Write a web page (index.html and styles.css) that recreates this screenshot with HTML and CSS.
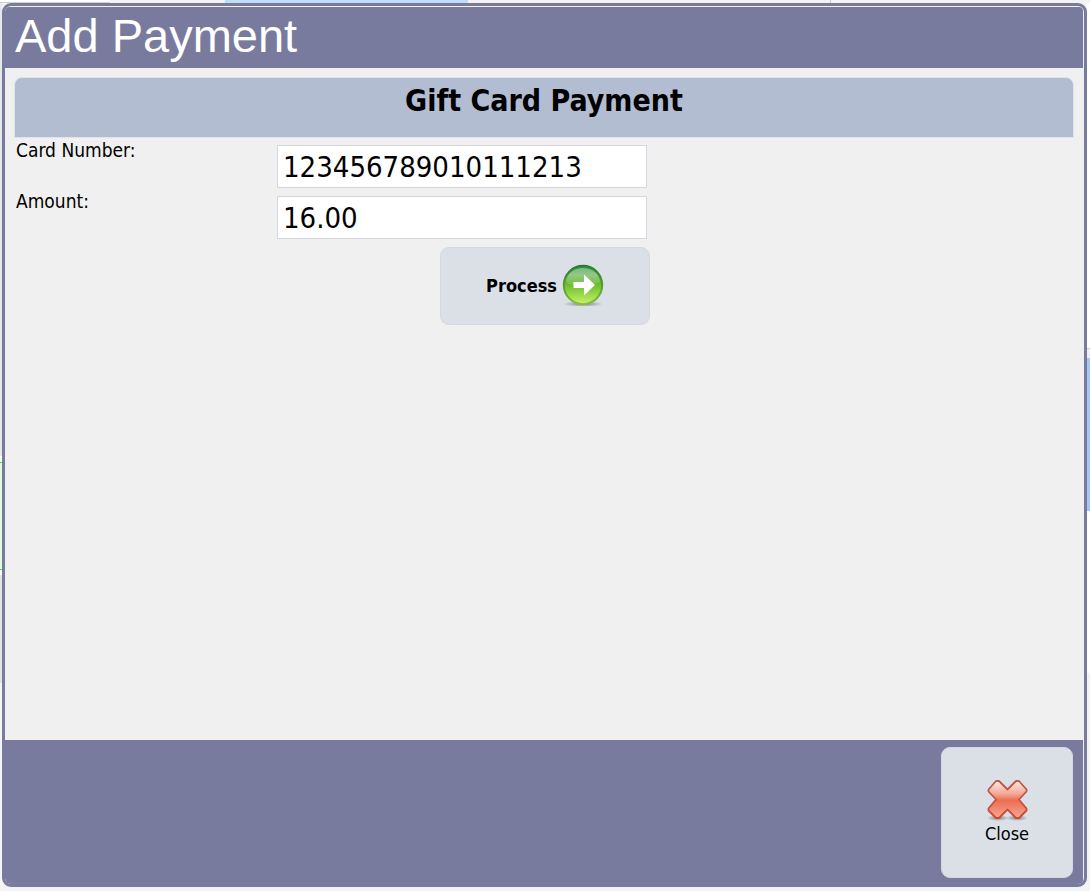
FILE: index.html
```html
<!DOCTYPE html>
<html lang="en">
<head>
    <meta charset="UTF-8">
    <meta name="viewport" content="width=device-width, initial-scale=1.0">
    <title>Add Payment</title>
    <link rel="stylesheet" href="styles.css">
</head>
<body>
    <div class="page-top">
        <div class="tab tab-first"></div>
        <div class="tab tab-gap"></div>
        <div class="tab tab-active"></div>
        <div class="tab tab-wide"></div>
        <div class="tab"></div>
    </div>
    <div class="page-left"></div>
    <div class="dialog" role="dialog" aria-labelledby="dialogTitle">
        <header class="dialog-header">
            <h1 id="dialogTitle">Add Payment</h1>
        </header>
        <main class="dialog-body">
            <h2>Gift Card Payment</h2>
            <form id="giftCardForm" class="payment-form">
                <label for="cardNumber">Card Number:</label>
                <input type="text" id="cardNumber" value="123456789010111213">
                <label for="amount">Amount:</label>
                <input type="text" id="amount" value="16.00">
                <button type="submit" class="btn process-btn">
                    Process
                    <svg width="42" height="42" viewBox="0 0 42 42" aria-hidden="true">
                        <defs>
                            <linearGradient id="ballFill" x1="0" y1="0" x2="0" y2="1">
                                <stop offset="0" stop-color="#2f8b3c"/>
                                <stop offset="0.45" stop-color="#66b82c"/>
                                <stop offset="0.75" stop-color="#9ad94a"/>
                                <stop offset="1" stop-color="#cdf268"/>
                            </linearGradient>
                            <linearGradient id="ballEdge" x1="0" y1="0" x2="0" y2="1">
                                <stop offset="0" stop-color="#2b7a3a"/>
                                <stop offset="0.6" stop-color="#57a62c"/>
                                <stop offset="1" stop-color="#86bf45"/>
                            </linearGradient>
                            <linearGradient id="ballShine" x1="0" y1="0" x2="0" y2="1">
                                <stop offset="0" stop-color="#fff" stop-opacity="0.35"/>
                                <stop offset="0.4" stop-color="#fff" stop-opacity="0.4"/>
                                <stop offset="1" stop-color="#fff" stop-opacity="0.08"/>
                            </linearGradient>
                            <radialGradient id="shadow">
                                <stop offset="0" stop-color="#555" stop-opacity="0.7"/>
                                <stop offset="1" stop-color="#555" stop-opacity="0"/>
                            </radialGradient>
                        </defs>
                        <ellipse cx="21" cy="40" rx="20" ry="3" fill="url(#shadow)"/>
                        <circle cx="21" cy="21" r="19.2" fill="url(#ballFill)" stroke="url(#ballEdge)" stroke-width="2"/>
                        <path d="M4 18C5 9 12 4 21 4s16 5 17 14c-5 3-10 2-17 3s-12 1-17-3z" fill="url(#ballShine)"/>
                        <path d="M11.500 18H22v-7.500L33 21 22 31.500V24H11.500z" fill="#fff"/>
                    </svg>
                </button>
            </form>
        </main>
        <footer class="dialog-footer">
            <button type="button" class="btn close-btn">
                <svg width="42" height="42" viewBox="0 0 42 42" aria-hidden="true">
                    <defs>
                        <linearGradient id="crossFill" x1="0" y1="0" x2="0" y2="1">
                            <stop offset="0" stop-color="#fdebe6"/>
                            <stop offset="0.35" stop-color="#f3a695"/>
                            <stop offset="0.52" stop-color="#ec6d50"/>
                            <stop offset="0.75" stop-color="#f18872"/>
                            <stop offset="1" stop-color="#f8a896"/>
                        </linearGradient>
                        <linearGradient id="crossEdge" x1="0" y1="0" x2="0" y2="1">
                            <stop offset="0" stop-color="#bd5a4a"/>
                            <stop offset="1" stop-color="#cc4a35"/>
                        </linearGradient>
                    </defs>
                    <ellipse cx="12" cy="39" rx="11" ry="3" fill="url(#shadow)"/>
                    <ellipse cx="31" cy="39" rx="11" ry="3" fill="url(#shadow)"/>
                    <path d="M10 2h3l8.500 8.500L30 2h3l7.500 8.500v2L33 20.500l7.500 9v2L33 39h-3L21.500 30.500 13 39h-3L2.500 31.500v-2L10 20.500l-7.500-8v-2z" fill="url(#crossFill)" stroke="url(#crossEdge)" stroke-width="1.800" stroke-linejoin="round"/>
                </svg>
                Close
            </button>
        </footer>
    </div>
    <div class="page-right"></div>

    <script>
        document.getElementById('giftCardForm').addEventListener('submit', function(event) {
            event.preventDefault();
        });
    </script>
</body>
</html>
```
FILE: styles.css
```css
:root {
    --frame-color: #797b9e;
    --panel-color: #f0f0f0;
    --button-color: #dbdfe6;
    --line-color: #d7d7e2;
}

* {
    box-sizing: border-box;
}

body {
    font-family: "DejaVu Sans Condensed", Tahoma, "DejaVu Sans", sans-serif;
    font-size: 19px;
    color: #000;
    margin: 0;
    min-height: 100vh;
    display: grid;
    grid-template-columns: 2px 1fr 3px;
    grid-template-rows: 3px 1fr;
    background: #f3f3f4;
}

/* edges of the page behind the dialog */
.page-top {
    grid-column: 1 / -1;
    display: flex;
}

.tab {
    flex: 260;
    background: #f3f3f3;
}

.tab-first {
    flex: 110;
    background: #fff;
    border-bottom: 1px solid #d0d0d0;
}

.tab-gap {
    flex: 116;
}

.tab-active {
    flex: 243;
    background: #bfdcf9;
}

.tab-wide {
    flex: 363;
    border-right: 1px solid #c8c8c8;
}

.page-left {
    background: linear-gradient(#e6e8ec 0 453px, #fff 453px 459px, #4be04b 459px 460px, #e0fbe0 460px 566px, #4be04b 566px 567px, #fff 567px 572px, #e2e4ea 572px 680px, #f5f5f5 680px);
}

.page-right {
    background: linear-gradient(#fff 0 345px, #ccc 345px 346px, #f0f0f0 346px 355px, #a1c9f1 355px 508px, #fff 508px 670px, #f3f3f3 670px);
}

.dialog {
    display: flex;
    flex-direction: column;
    margin-bottom: 4px;
    border: 3px solid var(--frame-color);
    border-radius: 9px;
    background: var(--panel-color);
    padding: 1px 1px 0 0;
    overflow: hidden;
}

.dialog-header {
    background: var(--frame-color);
    border-radius: 4px 4px 0 0;
    padding: 3px 10px 6px;
}

h1 {
    margin: 0;
    color: #fff;
    font: 47px/52px "Liberation Sans", Arial, sans-serif;
}

.dialog-body {
    flex: 1;
    padding: 9px;
}

h2 {
    margin: 0;
    height: 61px;
    padding-top: 5px;
    border: 1px solid #dfe3ea;
    border-radius: 8px 8px 0 0;
    background: #b2bdd2;
    font-size: 30px;
    line-height: 36px;
    text-align: center;
}

.payment-form {
    display: grid;
    grid-template-columns: 261px 370px;
    row-gap: 8px;
    margin-top: 7px;
    padding-left: 2px;
}

.payment-form label {
    line-height: 10px;
}

.payment-form input {
    height: 43px;
    padding: 0 5px;
    border: 1px solid var(--line-color);
    background: #fff;
    font-family: inherit;
    font-size: 29px;
    color: #000;
}

.btn {
    display: flex;
    align-items: center;
    justify-content: center;
    border: 1px solid var(--line-color);
    border-radius: 9px;
    background: var(--button-color);
    font-family: inherit;
    font-size: 18px;
    color: #000;
    cursor: pointer;
    padding: 0 0 2px;
}

.process-btn {
    grid-column: 2;
    justify-self: end;
    gap: 5px;
    width: 210px;
    height: 78px;
    margin-right: -3px;
    font-weight: bold;
}

.dialog-footer {
    display: flex;
    justify-content: flex-end;
    padding: 7px 10px 6px;
    border-radius: 0 0 4px 4px;
    background: var(--frame-color);
}

.close-btn {
    flex-direction: column;
    gap: 2px;
    width: 132px;
    height: 131px;
}
```
